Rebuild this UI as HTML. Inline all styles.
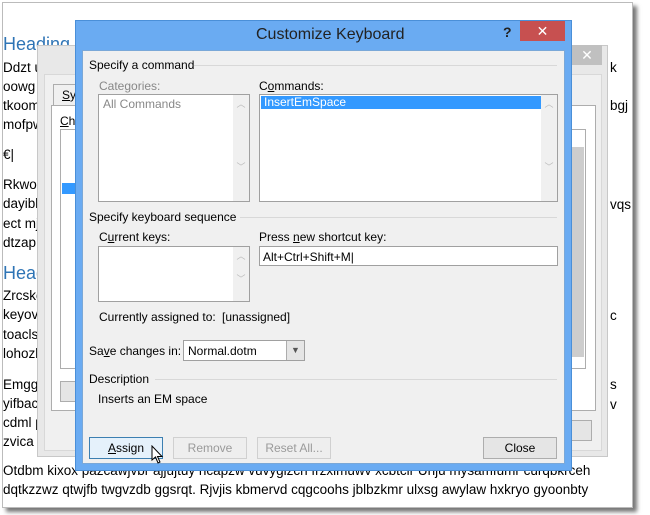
<!DOCTYPE html>
<html><head><meta charset="utf-8"><style>
*{margin:0;padding:0;box-sizing:border-box}
body{width:650px;height:515px;background:#fff;position:relative;overflow:hidden;font-family:"Liberation Sans","DejaVu Sans",sans-serif;font-size:12px;color:#000}
.a{position:absolute}
.doc{left:2px;top:2px;width:631px;height:506px;border:1px solid #bbb;background:#fff;box-shadow:4px 4px 4px #777}
.t{position:absolute;font-size:13.5px;white-space:nowrap;left:3px}
.h{color:#2E74B5;font-size:18px}
.box{position:absolute;background:#fff;border:1px solid #a0a0a0}
.sb{position:absolute;top:0;right:0;bottom:0;width:16px;background:#f0f0f0;color:#bbb;font-size:9px;text-align:center}
.btn{position:absolute;height:22px;border:1px solid #adadad;background:#e5e5e5;text-align:center;line-height:20px}
.dis{color:#9a9a9a;border-color:#d0d0d0;background:#eee}
.lbl{position:absolute;white-space:nowrap}
.line{position:absolute;height:1px;background:#d8d8d8}
</style></head><body>
<div class="a doc"></div>
<div class="t h" style="top:34px">Heading</div>
<div class="t" style="top:60px">Ddzt u</div>
<div class="t" style="top:79px">oowg</div>
<div class="t" style="top:98px">tkoom</div>
<div class="t" style="top:117px">mofpw</div>
<div class="t" style="top:147px">€|</div>
<div class="t" style="top:177px">Rkwol</div>
<div class="t" style="top:196px">dayibl</div>
<div class="t" style="top:216px">ect mj</div>
<div class="t" style="top:235px">dtzap</div>
<div class="t h" style="top:263px">Head</div>
<div class="t" style="top:288px">Zrcskc</div>
<div class="t" style="top:307px">keyov</div>
<div class="t" style="top:327px">toacls</div>
<div class="t" style="top:346px">lohozl</div>
<div class="t" style="top:377px">Emggy</div>
<div class="t" style="top:396px">yifbac</div>
<div class="t" style="top:415px">cdml p</div>
<div class="t" style="top:434px">zvica p</div>
<div class="t" style="top:463px">Otdbm kixox pazcawjvbr ajjujtuy ncapzw vuvygizcn frzximuwv xcbtcir Unju mysamfumr curqbkrceh</div>
<div class="t" style="top:482px">dqtkzzwz qtwjfb twgvzdb ggsrqt. Rjvjis kbmervd cqgcoohs jblbzkmr ulxsg awylaw hxkryo gyoonbty</div>
<div class="t" style="left:610px;top:60px">k</div>
<div class="t" style="left:610px;top:98px">bgj</div>
<div class="t" style="left:610px;top:197px">vqs</div>
<div class="t" style="left:610px;top:308px">c</div>
<div class="t" style="left:610px;top:377px">s</div>
<div class="t" style="left:610px;top:397px">v</div>

<div class="a" style="left:37px;top:45px;width:571px;height:412px;background:#e8e8e8;border:1px solid #c8c8c8"></div>
<div class="a" style="left:572px;top:45px;width:30px;height:20px;background:#c0c0c0;color:#fff;text-align:center;font-size:14px;line-height:20px">✕</div>
<div class="a" style="left:44px;top:74px;width:558px;height:377px;background:#f0f0f0;border:1px solid #d8d8d8"></div>
<div class="a" style="left:53px;top:84px;width:30px;height:22px;background:#f0f0f0;border:1px solid #adadad;font-size:12px;padding:3px 0 0 8px"><u>S</u>ym</div>
<div class="a" style="left:51px;top:105px;width:216px;height:306px;background:#fff;border:1px solid #adadad"></div>
<div class="a" style="left:266px;top:105px;width:330px;height:306px;background:#fff;border:1px solid #adadad"></div>
<div class="lbl" style="left:60px;top:114px"><u>C</u>h</div>
<div class="a" style="left:60px;top:129px;width:200px;height:240px;background:#fff;border:1px solid #adadad"></div>
<div class="a" style="left:62px;top:183px;width:14px;height:11px;background:#3399ff"></div>
<div class="a" style="left:566px;top:129px;width:20px;height:240px;background:#fff;border:1px solid #adadad"></div>
<div class="a" style="left:572px;top:147px;width:12px;height:210px;background:#cdcdcd"></div>
<div class="btn" style="left:60px;top:381px;width:25px;height:21px"></div>
<div class="btn" style="left:560px;top:420px;width:32px;height:21px"></div>

<div class="a" style="left:75px;top:20px;width:497px;height:451px;background:#6aabf2;border:1px solid #4a8fd8"></div>
<div class="lbl" style="left:256px;top:26px;font-size:16px;color:#222">Customize Keyboard</div>
<div class="lbl" style="left:503px;top:24px;font-size:14px;font-weight:bold;color:#222">?</div>
<div class="a" style="left:520px;top:21px;width:45px;height:20px;background:#c75050;color:#fff;text-align:center;font-size:14px;line-height:20px">✕</div>
<div class="a" style="left:82px;top:50px;width:483px;height:414px;background:#f0f0f0;border:1px solid #7aa8d8"></div>

<div class="lbl" style="left:89px;top:58px">Specify a command</div>
<div class="line" style="left:194px;top:65px;width:363px"></div>
<div class="lbl" style="left:99px;top:79px;color:#888">Categories:</div>
<div class="box" style="left:98px;top:94px;width:152px;height:108px"><div class="lbl" style="left:4px;top:2px;color:#888">All Commands</div><div class="sb" style="padding-top:2px">︿<br><br><br><br><br><br>﹀</div></div>
<div class="lbl" style="left:259px;top:79px">C<u>o</u>mmands:</div>
<div class="box" style="left:259px;top:94px;width:299px;height:108px"><div class="a" style="left:1px;top:1px;width:280px;height:13px;background:#3399ff;color:#fff;padding-left:3px;line-height:13px">InsertEmSpace</div><div class="sb" style="padding-top:2px">︿<br><br><br><br><br><br>﹀</div></div>

<div class="lbl" style="left:89px;top:210px">Specify keyboard sequence</div>
<div class="line" style="left:240px;top:217px;width:317px"></div>
<div class="lbl" style="left:99px;top:230px">C<u>u</u>rrent keys:</div>
<div class="box" style="left:98px;top:246px;width:152px;height:56px"><div class="sb" style="padding-top:2px">︿<br><br>﹀</div></div>
<div class="lbl" style="left:259px;top:230px">Press <u>n</u>ew shortcut key:</div>
<div class="box" style="left:259px;top:246px;width:299px;height:20px"><div class="lbl" style="left:3px;top:3px">Alt+Ctrl+Shift+M|</div></div>
<div class="lbl" style="left:99px;top:310px">Currently assigned to:</div>
<div class="lbl" style="left:222px;top:310px">[unassigned]</div>
<div class="lbl" style="left:89px;top:344px">Sa<u>v</u>e changes in:</div>
<div class="box" style="left:183px;top:340px;width:122px;height:21px"><div class="lbl" style="left:4px;top:3px">Normal.dotm</div><div class="a" style="right:0;top:0;width:18px;height:19px;background:#e5e5e5;border-left:1px solid #adadad;font-size:9px;text-align:center;line-height:19px;color:#555">▼</div></div>
<div class="lbl" style="left:89px;top:372px">Description</div>
<div class="line" style="left:155px;top:379px;width:402px"></div>
<div class="lbl" style="left:98px;top:392px">Inserts an EM space</div>

<div class="btn" style="left:89px;top:437px;width:74px;background:#e5f1fb;border-color:#3c7fb1"><u>A</u>ssign</div>
<div class="btn dis" style="left:173px;top:437px;width:74px">Remove</div>
<div class="btn dis" style="left:257px;top:437px;width:74px">Reset All...</div>
<div class="btn" style="left:483px;top:437px;width:74px">Close</div>
<svg class="a" style="left:151px;top:445px" width="14" height="20"><path d="M1 1 L1 15 L4.5 12 L7 18 L9 17 L6.5 11.5 L11 11.5 Z" fill="#fff" stroke="#000" stroke-width="1"/></svg>
</body></html>
